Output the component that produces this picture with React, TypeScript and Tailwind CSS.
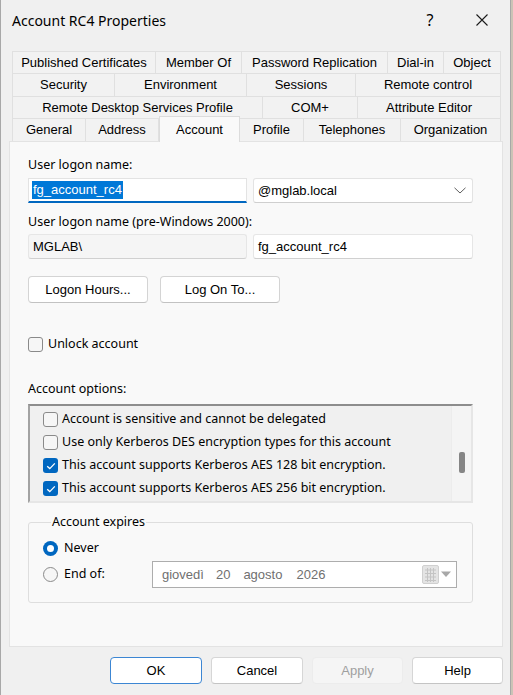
import React from 'react';

// tab rows, top to bottom; widths in px taken from the dialog
const tabRows: { label: string; w: string; active?: boolean }[][] = [
  [
    { label: 'Published Certificates', w: 'w-[144px]' },
    { label: 'Member Of', w: 'w-[86px]' },
    { label: 'Password Replication', w: 'w-[146px]' },
    { label: 'Dial-in', w: 'w-[56px]' },
    { label: 'Object', w: 'w-[57px]' },
  ],
  [
    { label: 'Security', w: 'w-[103px]' },
    { label: 'Environment', w: 'w-[132px]' },
    { label: 'Sessions', w: 'w-[109px]' },
    { label: 'Remote control', w: 'w-[145px]' },
  ],
  [
    { label: 'Remote Desktop Services Profile', w: 'w-[251px]' },
    { label: 'COM+', w: 'w-[95px]' },
    { label: 'Attribute Editor', w: 'w-[143px]' },
  ],
  [
    { label: 'General', w: 'w-[74px]' },
    { label: 'Address', w: 'w-[73px]' },
    { label: 'Account', w: 'w-[81px]', active: true },
    { label: 'Profile', w: 'w-[64px]' },
    { label: 'Telephones', w: 'w-[97px]' },
    { label: 'Organization', w: 'w-[100px]' },
  ],
];

const accountOptions = [
  { text: 'Account is sensitive and cannot be delegated', checked: false },
  { text: 'Use only Kerberos DES encryption types for this account', checked: false },
  { text: 'This account supports Kerberos AES 128 bit encryption.', checked: true },
  { text: 'This account supports Kerberos AES 256 bit encryption.', checked: true },
];

const segoe = "font-['Noto_Sans',sans-serif] text-[12.5px]";

const CheckBox = ({ checked }: { checked?: boolean }) =>
  checked ? (
    <span className="w-[15px] h-[15px] shrink-0 rounded-[3px] bg-[#0067c0] flex items-center justify-center">
      <svg width="10" height="8" viewBox="0 0 10 8">
        <path d="M1.2 4.2 L3.8 6.6 L8.8 1.4" stroke="white" strokeWidth="1.3" fill="none" />
      </svg>
    </span>
  ) : (
    <span className="w-[15px] h-[15px] shrink-0 rounded-[3px] border border-[#8a8a8a] bg-[#f6f6f6]" />
  );

const Radio = ({ checked }: { checked?: boolean }) =>
  checked ? (
    <span className="w-[15px] h-[15px] shrink-0 rounded-full bg-[#0067c0] flex items-center justify-center">
      <span className="w-[7px] h-[7px] rounded-full bg-white" />
    </span>
  ) : (
    <span className="w-[15px] h-[15px] shrink-0 rounded-full border border-[#8a8a8a] bg-[#f6f6f6]" />
  );

const Button = ({ children, className = '' }: { children: React.ReactNode; className?: string }) => (
  <button className={`h-[27px] rounded-[4px] border text-[13px] flex items-center justify-center ${className}`}>
    {children}
  </button>
);

export default function App() {
  return (
    <div className="w-[513px] h-[695px] bg-[#cbc3b6] flex overflow-hidden">
      <div className="w-[511px] h-full bg-[#f0f0f0] border-l border-r border-[#a8a8a8] flex flex-col font-['Liberation_Sans',Arial,sans-serif] text-[13px] text-black">
        {/* title bar */}
        <div className="h-[40px] flex items-center pl-[11px] shrink-0">
          <span className="font-['Noto_Sans',sans-serif] text-[14px] flex-1">Account RC4 Properties</span>
          <span className="font-['Noto_Sans',sans-serif] text-[16px] w-[20px] text-center mr-[36px]">?</span>
          <svg width="12" height="12" viewBox="0 0 12 12" className="mr-[22px]">
            <path d="M0.5 0.5 L11.5 11.5 M11.5 0.5 L0.5 11.5" stroke="#1a1a1a" strokeWidth="1.1" />
          </svg>
        </div>

        <div className="pl-[8px] pt-[11px] flex flex-col">
          {/* tab strip */}
          <div className="ml-[3px] w-[489px] flex flex-col">
            {tabRows.map((row, i) => (
              <div key={i} className={`flex ${i % 2 === 0 ? 'h-[22px]' : 'h-[23px]'}`}>
                {row.map((t) =>
                  t.active ? (
                    <div
                      key={t.label}
                      className={`${t.w} relative z-10 -mt-[2px] h-[26px] bg-[#f9f9f9] border border-b-0 border-[#dcdcdc] flex items-start justify-center pt-[3px]`}
                    >
                      {t.label}
                    </div>
                  ) : (
                    <div
                      key={t.label}
                      className={`${t.w} bg-[#f2f2f2] border-t border-r border-[#e0e0e0] first:border-l flex items-center justify-center`}
                    >
                      {t.label}
                    </div>
                  )
                )}
              </div>
            ))}
          </div>

          {/* tab page */}
          <div className="w-[494px] h-[506px] bg-[#f9f9f9] border border-[#e3e3e3] pl-[18px] pt-[15px] flex flex-col">
            <div className={`${segoe} leading-[16px]`}>User logon name:</div>
            <div className="mt-[5px] flex gap-[6px]">
              <div className="w-[219px] h-[25px] bg-white border border-[#e3e3e3] border-b-2 border-b-[#0067c0] flex items-center pl-[3px]">
                <span className="bg-[#0078d7] text-white px-[1px] leading-[18px]">fg_account_rc4</span>
              </div>
              <div className="w-[220px] h-[25px] bg-white border border-[#e3e3e3] border-b-[#cfcfcf] rounded-[3px] flex items-center pl-[4px] pr-[6px]">
                <span className="flex-1">@mglab.local</span>
                <svg width="12" height="7" viewBox="0 0 12 7">
                  <path d="M0.5 0.8 L6 6 L11.5 0.8" stroke="#5f5f5f" strokeWidth="1" fill="none" />
                </svg>
              </div>
            </div>

            <div className={`${segoe} leading-[16px] mt-[11px]`}>User logon name (pre-Windows 2000):</div>
            <div className="mt-[4px] flex gap-[6px]">
              <div className="w-[219px] h-[25px] bg-[#f5f5f5] border border-[#e6e6e6] border-b-[#d0d0d0] rounded-[3px] flex items-center pl-[4px]">
                MGLAB\
              </div>
              <div className="w-[220px] h-[25px] bg-white border border-[#e6e6e6] border-b-[#d0d0d0] rounded-[3px] flex items-center pl-[4px]">
                fg_account_rc4
              </div>
            </div>

            <div className="mt-[17px] flex gap-[12px]">
              <Button className="w-[120px] bg-white text-black border-[#d4d4d4] border-b-[#c2c2c2]">Logon Hours...</Button>
              <Button className="w-[120px] bg-white text-black border-[#d4d4d4] border-b-[#c2c2c2]">Log On To...</Button>
            </div>

            <label className={`${segoe} mt-[33px] flex items-center gap-[5px] h-[16px]`}>
              <CheckBox />
              <span>Unlock account</span>
            </label>

            <div className={`${segoe} leading-[16px] mt-[29px]`}>Account options:</div>

            {/* options list */}
            <div className="mt-[7px] w-[445px] h-[99px] border-2 border-t-[#8d8d8d] border-l-[#a3a3a3] border-r-[#e6e6e6] border-b-[#e6e6e6] bg-[#f0f0f0] flex">
              <div className="flex-1 pl-[13px] pt-[2px] flex flex-col">
                {accountOptions.map((o) => (
                  <div key={o.text} className={`${segoe} h-[23px] flex items-center gap-[4px]`}>
                    <CheckBox checked={o.checked} />
                    <span>{o.text}</span>
                  </div>
                ))}
              </div>
              <div className="w-[20px] bg-[#f4f4f4] border-l border-[#ececec] flex justify-center pt-[46px]">
                <div className="w-[6px] h-[21px] rounded-[2px] bg-[#858585]" />
              </div>
            </div>

            {/* account expires */}
            <fieldset className="mt-[11px] w-[445px] h-[89px] border border-[#dedede] rounded-[3px] pl-[14px] pb-[14px]">
              <legend className={`${segoe} ml-[8px] px-[1px] leading-[16px]`}>Account expires</legend>
              <div className={`${segoe} mt-[9px] h-[18px] flex items-center gap-[6px]`}>
                <Radio checked />
                <span>Never</span>
              </div>
              <div className="mt-[4px] flex items-center">
                <div className={`${segoe} w-[109px] flex items-center gap-[6px]`}>
                  <Radio />
                  <span>End of:</span>
                </div>
                <div className="w-[305px] h-[27px] bg-white border border-[#adadad] flex items-center pl-[9px] pr-[4px] text-[#707070]">
                  <span>giovedì</span>
                  <span className="ml-[12px]">20</span>
                  <span className="ml-[13px]">agosto</span>
                  <span className="ml-[14px]">2026</span>
                  <span className="flex-1" />
                  <svg width="17" height="19" viewBox="0 0 17 19">
                    <rect x="0.5" y="0.5" width="16" height="18" rx="1.5" fill="#e4e4e4" stroke="#d0d0d0" />
                    <path d="M3 5 H14 M3 8.5 H14 M3 12 H14 M3 15.5 H14 M5.5 3 V17 M8.5 3 V17 M11.5 3 V17" stroke="#c4c4c4" strokeWidth="1" />
                  </svg>
                  <svg width="12" height="7" viewBox="0 0 12 7" className="ml-[1px]">
                    <path d="M1 0.5 H11 L6 6 Z" fill="#a8a8a8" />
                  </svg>
                </div>
              </div>
            </fieldset>
          </div>

          {/* dialog buttons */}
          <div className="mt-[10px] w-[494px] flex justify-end gap-[9px]">
            <Button className="w-[92px] bg-white text-black border-[#3c86d3]">OK</Button>
            <Button className="w-[92px] bg-white text-black border-[#d6d6d6] border-b-[#c4c4c4]">Cancel</Button>
            <Button className="w-[91px] bg-[#f5f5f5] text-[#9f9f9f] border-[#ececec]">Apply</Button>
            <Button className="w-[91px] bg-white text-black border-[#d6d6d6] border-b-[#c4c4c4]">Help</Button>
          </div>
        </div>
      </div>
    </div>
  );
}
